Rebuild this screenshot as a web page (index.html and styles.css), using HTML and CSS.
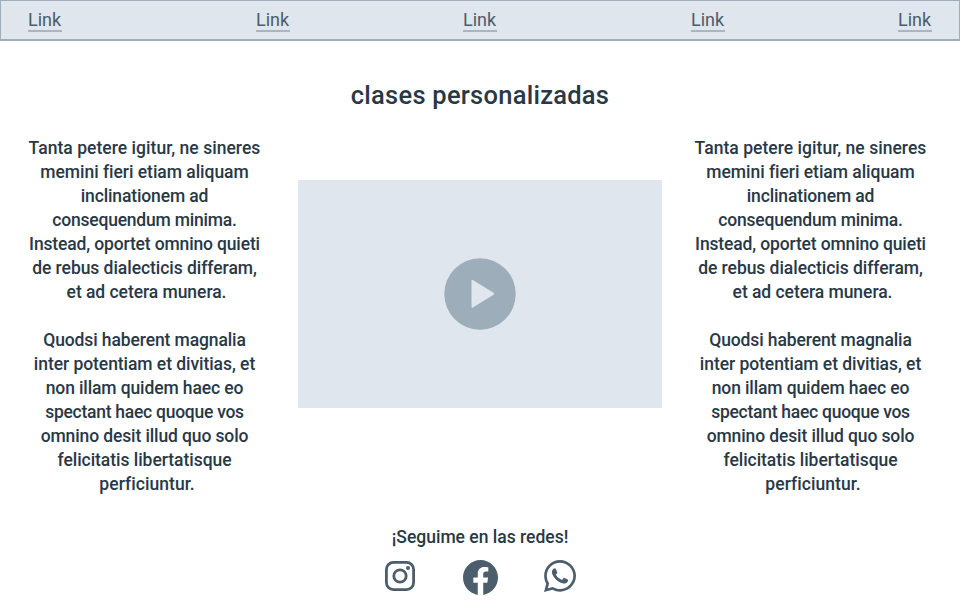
FILE: index.html
```html
<!DOCTYPE html>
<html lang="es">
<head>
<meta charset="utf-8">
<title>Clases personalizadas</title>
<link rel="stylesheet" href="styles.css">
</head>
<body>
<nav class="nav">
  <a class="link">Link</a><a class="link">Link</a><a class="link">Link</a><a class="link">Link</a><a class="link">Link</a>
</nav>
<main>
  <h1 class="title">clases personalizadas</h1>
  <div class="columns">
    <div class="copy">
      <p class="first"><span>Tanta petere igitur, ne sineres</span><span>memini fieri etiam aliquam</span><span>inclinationem ad</span><span>consequendum minima.</span><span>Instead, oportet omnino quieti</span><span>de rebus dialecticis differam,</span><span>et ad cetera munera.</span></p>
      <p class="second"><span>Quodsi haberent magnalia</span><span>inter potentiam et divitias, et</span><span>non illam quidem haec eo</span><span>spectant haec quoque vos</span><span>omnino desit illud quo solo</span><span>felicitatis libertatisque</span><span>perficiuntur.</span></p>
    </div>
    <div class="video">
      <svg width="72" height="72" viewBox="0 0 72 72"><circle class="disc" cx="36" cy="36" r="35.7"/><path class="play" d="M28.9 22L49.5 34.8Q51 35.8 49.5 36.8L28.9 49.6Q27.5 50.2 27.5 48.8V22.8Q27.5 21.3 28.9 22Z"/></svg>
    </div>
    <div class="copy">
      <p class="first"><span>Tanta petere igitur, ne sineres</span><span>memini fieri etiam aliquam</span><span>inclinationem ad</span><span>consequendum minima.</span><span>Instead, oportet omnino quieti</span><span>de rebus dialecticis differam,</span><span>et ad cetera munera.</span></p>
      <p class="second"><span>Quodsi haberent magnalia</span><span>inter potentiam et divitias, et</span><span>non illam quidem haec eo</span><span>spectant haec quoque vos</span><span>omnino desit illud quo solo</span><span>felicitatis libertatisque</span><span>perficiuntur.</span></p>
    </div>
  </div>
</main>
<footer class="social">
  <p class="follow">¡Seguime en las redes!</p>
  <div class="icons">
    <svg class="instagram" width="30" height="30" viewBox="0 0 30 30"><rect x="1.4" y="1.4" width="27.2" height="27.2" rx="7" fill="none" stroke="currentColor" stroke-width="2.8"/><circle cx="15" cy="15" r="6.2" fill="none" stroke="currentColor" stroke-width="2.8"/><circle cx="23" cy="7" r="2" fill="currentColor"/></svg>
    <svg class="facebook" width="35" height="35" viewBox="0 0 24 24"><path fill="currentColor" d="M24 12.073c0-6.627-5.373-12-12-12s-12 5.373-12 12c0 5.99 4.388 10.954 10.125 11.854v-8.385H7.078v-3.47h3.047V9.43c0-3.007 1.792-4.669 4.533-4.669 1.312 0 2.686.235 2.686.235v2.953H15.83c-1.491 0-1.956.925-1.956 1.874v2.25h3.328l-.532 3.47h-2.796v8.385C19.612 23.027 24 18.062 24 12.073z"/></svg>
    <svg class="whatsapp" width="32" height="32" viewBox="0 0 448 448"><path fill="currentColor" transform="translate(0 -32)" d="M380.9 97.1C339 55.1 283.2 32 223.9 32c-122.4 0-222 99.6-222 222 0 39.1 10.2 77.3 29.6 111L0 480l117.7-30.9c32.4 17.7 68.9 27 106.1 27h.1c122.3 0 224.1-99.6 224.1-222 0-59.3-25.2-115-67.1-157zm-157 341.6c-33.2 0-65.7-8.9-94-25.7l-6.7-4-69.8 18.3L72 359.2l-4.4-7c-18.5-29.4-28.2-63.3-28.2-98.2 0-101.7 82.8-184.5 184.6-184.5 49.3 0 95.6 19.2 130.4 54.1 34.8 34.9 56.2 81.2 56.1 130.5 0 101.8-84.9 184.6-186.6 184.6zm101.2-138.2c-5.5-2.8-32.8-16.2-37.9-18-5.1-1.9-8.8-2.8-12.5 2.8-3.7 5.6-14.3 18-17.6 21.8-3.2 3.7-6.5 4.2-12 1.4-32.6-16.3-54-29.1-75.5-66-5.7-9.8 5.7-9.1 16.3-30.3 1.8-3.7.9-6.9-.5-9.7-1.4-2.8-12.5-30.1-17.1-41.2-4.5-10.8-9.1-9.3-12.5-9.5-3.2-.2-6.9-.2-10.6-.2-3.7 0-9.7 1.4-14.8 6.9-5.1 5.6-19.4 19-19.4 46.3 0 27.3 19.9 53.7 22.6 57.4 2.8 3.7 39.1 59.7 94.8 83.8 35.2 15.2 49 16.5 66.6 13.9 10.7-1.6 32.8-13.4 37.4-26.4 4.6-13 4.6-24.1 3.2-26.4-1.3-2.5-5-3.9-10.5-6.6z"/></svg>
  </div>
</footer>
</body>
</html>
```
FILE: styles.css
```css
* { box-sizing: border-box; }
body { margin: 0; height: 600px; overflow: hidden; background: #fff; color: #293845; font: 500 17.5px/24px Roboto, "Liberation Sans", sans-serif; }
p, h1 { margin: 0; }
.nav { height: 41px; display: grid; grid-template-columns: 228px 207px 228px 207px 34px; padding: 9px 27px 0; background: #dfe6ed; border: 1px solid #9eadba; border-bottom-width: 2px; }
.link { width: 34px; height: 22px; line-height: 20px; font-size: 18px; font-weight: 400; color: #4c5d6b; border-bottom: 2px solid #a9b5c0; white-space: nowrap; }
.title { padding-top: 38px; height: 95px; font-size: 25.5px; line-height: 32px; font-weight: 500; text-align: center; letter-spacing: .25px; }
.columns { display: flex; justify-content: space-between; padding: 0 33px 0 28px; height: 384px; }
.copy { width: 233px; text-align: center; white-space: nowrap; }
.copy span { display: block; }
.copy p + p { margin-top: 24px; }

.first span:nth-child(1) { letter-spacing: .04px; }
.first span:nth-child(2) { letter-spacing: -.03px; }
.first span:nth-child(3) { letter-spacing: -.13px; }
.first span:nth-child(4) { letter-spacing: -.21px; }
.first span:nth-child(5) { letter-spacing: -.15px; }
.first span:nth-child(6) { letter-spacing: -.05px; }
.first span:nth-child(7) { letter-spacing: -.05px; padding-left: 4px; }
.second span:nth-child(1) { letter-spacing: -.11px; }
.second span:nth-child(2) { letter-spacing: -.06px; }
.second span:nth-child(3) { letter-spacing: -.12px; }
.second span:nth-child(4) { letter-spacing: -.26px; }
.second span:nth-child(5) { letter-spacing: -.12px; }
.second span:nth-child(6) { letter-spacing: -.04px; }
.second span:nth-child(7) { letter-spacing: .05px; padding-left: 5px; }

.video { width: 364px; height: 228px; margin: 44px 0 0 5px; background: #dfe6ed; display: flex; align-items: center; justify-content: center; }
.disc { fill: #9eadba; }
.play { fill: #dfe6ed; }
.social { padding-top: 5px; text-align: center; }
.follow { letter-spacing: 0; }
.icons { display: flex; align-items: flex-start; color: #4c5d6b; padding: 11px 0 0 385px; }
.instagram { margin-top: 1px; }
.facebook { margin: 0 0 0 47.5px; }
.whatsapp { margin-left: 46.5px; }
```
